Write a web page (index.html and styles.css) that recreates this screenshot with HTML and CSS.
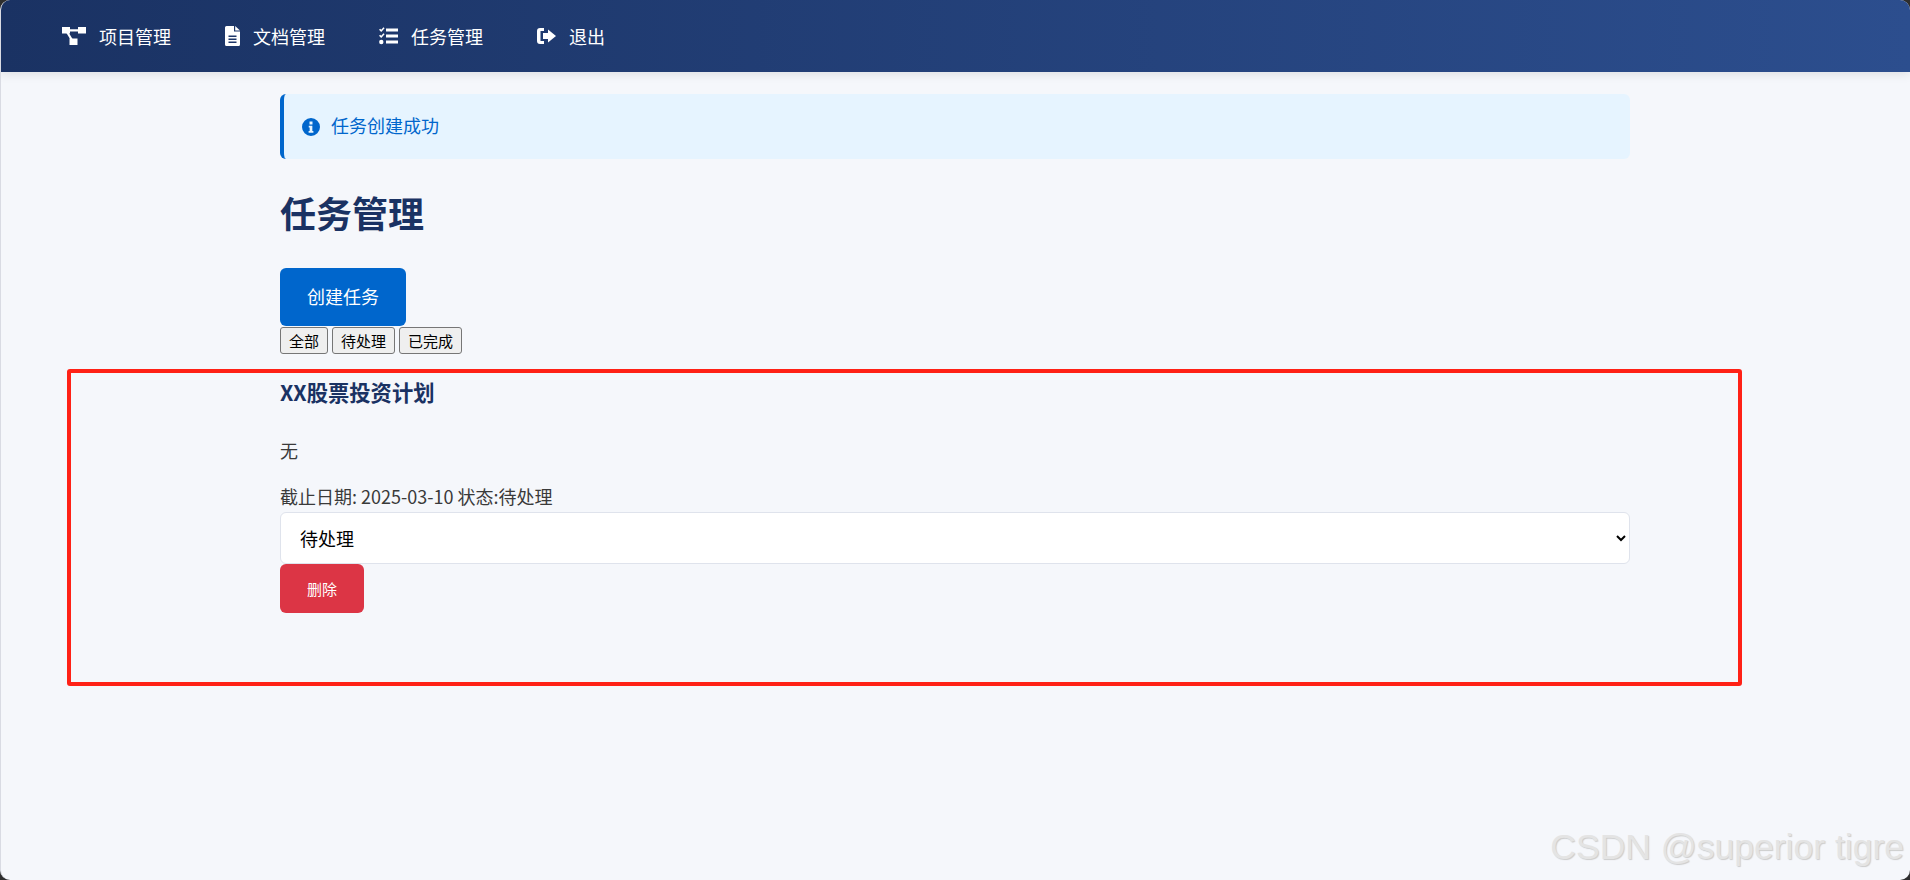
FILE: index.html
```html
<!DOCTYPE html>
<html lang="zh">
<head>
<meta charset="utf-8">
<title>任务管理</title>
<link rel="stylesheet" href="styles.css">
</head>
<body>
<nav class="nav">
  <a class="nav-link"><svg class="nav-icon icon-project" viewBox="0 0 24 18"><path d="M0 0h8v6.500H0zM16 0h8v6.500h-8zM7.500 11.500h8V18h-8z"/><path d="M7 2.200h10v2.200H7zM3.800 5l1.900-1.100 5 8.300-1.900 1.100z"/></svg>项目管理</a>
  <a class="nav-link"><svg class="nav-icon icon-file" viewBox="0 0 15 20"><path fill-rule="evenodd" d="M0 1.500A1.500 1.500 0 0 1 1.500 0H9v5.500h6v13a1.500 1.500 0 0 1-1.500 1.500h-12A1.500 1.500 0 0 1 0 18.500zM3.500 9.500V11h8V9.500zM3.500 12.500V14h8v-1.500zM3.500 15.500V17h8v-1.500z"/><path d="M10.200 0L15 4.500h-4.800z"/></svg>文档管理</a>
  <a class="nav-link"><svg class="nav-icon icon-tasks" viewBox="0 0 19 18"><path d="M7 1.500h12v3H7zM7 7.500h12v3H7zM7 13.500h12v3H7z"/><path d="M0 2.800l1.200-1 1 1L4.500 .3l1.100 1L2.200 5z"/><path d="M0 8.800l1.200-1 1 1L4.500 6.300l1.100 1L2.200 11z"/><circle cx="2.300" cy="15" r="2.200"/></svg>任务管理</a>
  <a class="nav-link"><svg class="nav-icon icon-exit" viewBox="0 0 19 18"><path d="M11 2.500l8 6.500-8 6.500V12H6V6h5z"/><path d="M7 1H3a3 3 0 0 0-3 3v10a3 3 0 0 0 3 3h4v-3H3.500V4H7z"/></svg>退出</a>
</nav>
<main class="container">
  <div class="alert">
    <svg class="alert-icon" viewBox="0 0 24 24"><path fill-rule="evenodd" d="M12 0a12 12 0 1 0 0 24a12 12 0 0 0 0-24zM10 4.800h4v3.700h-4zM9 10.300h4.800v7h1.400v2.200H8.800v-2.200h1.400v-4.800H9z"/></svg>
    <span class="alert-text">任务创建成功</span>
  </div>
  <h1 class="title">任务管理</h1>
  <button class="btn-primary" type="button"><span class="btn-label">创建任务</span></button>
  <div class="filters">
    <button class="filter" type="button">全部</button>
    <button class="filter" type="button">待处理</button>
    <button class="filter" type="button">已完成</button>
  </div>
  <section class="task">
    <h3 class="task-title">XX股票投资计划</h3>
    <p class="task-desc">无</p>
    <p class="task-meta">截止日期: 2025-03-10 状态:待处理</p>
    <select class="status">
      <option>待处理</option>
      <option>已完成</option>
    </select>
    <button class="btn-danger" type="button">删除</button>
  </section>
</main>
<div class="highlight"></div>
<div class="watermark">CSDN @superior tigre</div>
</body>
</html>
```

FILE: styles.css
```css
* { box-sizing: border-box; }
html { background: #2e2e2e; }
body {
  margin: 0;
  height: 880px;
  overflow: hidden;
  background: #f5f7fb;
  color: #3a3a3a;
  font-family: "Noto Sans CJK SC", "Liberation Sans", sans-serif;
  font-size: 18px;
  position: relative;
  border-left: 1px solid #d9dbe3;
  border-radius: 10px;
}
.nav {
  height: 72px;
  display: flex;
  align-items: center;
  padding-left: 62px;
  gap: 54px;
  background: linear-gradient(90deg, #1a3263, #2c4e8e);
  box-shadow: 0 2px 10px rgba(0, 0, 0, 0.1);
  margin-left: -1px;
}
.nav-link {
  display: flex;
  align-items: center;
  gap: 13px;
  color: #fff;
  font-size: 18px;
  line-height: 24px;
}
.nav-icon { height: 18px; fill: #fff; flex: none; }
.icon-project { width: 24px; }
.icon-file { width: 15px; height: 20px; }
.icon-tasks { width: 19px; }
.icon-exit { width: 19px; }
.container {
  width: 1350px;
  margin-left: 279px;
  padding-top: 22px;
}
.alert {
  height: 65px;
  display: flex;
  align-items: center;
  gap: 11px;
  padding-left: 18px;
  background: #e6f4ff;
  border-left: 4px solid #0066cc;
  border-radius: 6px;
  color: #0066cc;
}
.alert-icon { width: 18px; height: 18px; fill: #0066cc; }
.alert-text { padding-bottom: 4px; }
.title {
  margin: 27px 0 0;
  height: 82px;
  color: #1a3263;
  font-size: 36px;
  line-height: 52px;
  font-weight: 700;
}
.btn-primary {
  display: block;
  width: 126px;
  height: 58px;
  border: 0;
  border-radius: 6px;
  background: #0066cc;
  color: #fff;
  font: 18px "Noto Sans CJK SC", sans-serif;
  padding: 0 0 3px;
}
.filters { display: flex; gap: 4px; margin-top: 1px; height: 27px; }
.filter {
  height: 27px;
  padding: 0 8px;
  border: 1px solid #767676;
  border-radius: 3px;
  background: #efefef;
  color: #000;
  font: 15px "Noto Sans CJK SC", sans-serif;
}
.task { padding-top: 24px; }
.task-title {
  margin: 0;
  color: #1a3263;
  font-size: 21.3px;
  line-height: 28px;
  font-weight: 700;
}
.task-desc { margin: 32px 0 0; line-height: 24px; }
.task-meta { margin: 22px 0 0; line-height: 24px; }
.status {
  display: block;
  width: 100%;
  height: 52px;
  margin-top: 4px;
  padding: 0 15px;
  border: 1px solid #dfe3ec;
  border-radius: 6px;
  background: #fff;
  color: #000;
  font: 18px "Noto Sans CJK SC", sans-serif;
}
.btn-danger {
  display: block;
  width: 84px;
  height: 49px;
  margin-top: 0;
  border: 0;
  border-radius: 6px;
  background: #dc3545;
  color: #fff;
  font: 15px "Noto Sans CJK SC", sans-serif;
  padding: 0;
}
.highlight {
  position: absolute;
  left: 66px;
  top: 369px;
  width: 1675px;
  height: 317px;
  border: 4px solid #ff2116;
  border-radius: 3px;
  pointer-events: none;
}
.watermark {
  position: absolute;
  right: 6px;
  bottom: 13px;
  color: #e4e4e4;
  font-family: "Liberation Sans", sans-serif;
  font-size: 35.5px;
  line-height: 40px;
  text-shadow: 1px 1px 1px #cccccc;
}
```
